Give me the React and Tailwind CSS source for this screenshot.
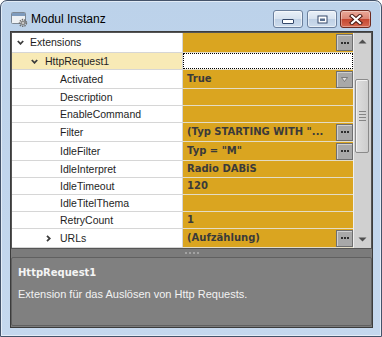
import React from 'react'

const rows = [
  { name: 'Extensions', indent: 'pl-[5px]', chevron: 'down', gap: 'ml-[6px]', btn: 'dots', h: 'h-[20px]' },
  { name: 'HttpRequest1', indent: 'pl-[19px]', chevron: 'down', gap: 'ml-[7px]', selected: true, h: 'h-[17px]' },
  { name: 'Activated', value: 'True', btn: 'drop', h: 'h-[19px]' },
  { name: 'Description', h: 'h-[17px]' },
  { name: 'EnableCommand', h: 'h-[17px]' },
  { name: 'Filter', value: '(Typ STARTING WITH "...', btn: 'dots', h: 'h-[19px]' },
  { name: 'IdleFilter', value: 'Typ = "M"', btn: 'dots', h: 'h-[19px]' },
  { name: 'IdleInterpret', value: 'Radio DABiS', h: 'h-[17px]' },
  { name: 'IdleTimeout', value: '120', h: 'h-[17px]' },
  { name: 'IdleTitelThema', h: 'h-[17px]' },
  { name: 'RetryCount', value: '1', h: 'h-[17px]' },
  { name: 'URLs', indent: 'pl-[34px]', chevron: 'right', gap: 'ml-[9px]', value: '(Aufzählung)', btn: 'dots', h: 'h-[19px]' },
]

function Chevron({ dir }) {
  if (dir === 'right') {
    return (
      <svg width="5" height="7" viewBox="0 0 5 7" className="shrink-0">
        <path d="M1 0.8 L3.8 3.5 L1 6.2" fill="none" stroke="#3c3c3c" strokeWidth="1.8" />
      </svg>
    )
  }
  return (
    <svg width="7" height="5" viewBox="0 0 7 5" className="shrink-0">
      <path d="M0.8 1 L3.5 3.8 L6.2 1" fill="none" stroke="#3c3c3c" strokeWidth="1.8" />
    </svg>
  )
}

function CellButton({ kind }) {
  return (
    <div className="flex h-[17px] w-[17px] shrink-0 items-center justify-center border border-[#6f6f6f] bg-[#a8a8a8] shadow-[inset_1px_1px_0_#cfcfcf]">
      {kind === 'dots' ? (
        <div className="flex gap-[1px]">
          <span className="h-[2px] w-[2px] bg-[#2e2e2e]" />
          <span className="h-[2px] w-[2px] bg-[#2e2e2e]" />
          <span className="h-[2px] w-[2px] bg-[#2e2e2e]" />
        </div>
      ) : (
        <svg width="7" height="5" viewBox="0 0 7 5">
          <path d="M0.5 0.5 L6.5 0.5 L3.5 4.5 Z" fill="#e2e2e2" stroke="#6a6a6a" strokeWidth="0.8" />
        </svg>
      )}
    </div>
  )
}

function PropertyRow({ row }) {
  return (
    <div className={`flex ${row.h}`}>
      <div
        className={`flex w-[171px] items-center border-b border-r border-[#d6d6d6] ${row.indent || 'pl-[48px]'} ${
          row.selected ? 'bg-[#f8eab6]' : 'bg-white'
        }`}
      >
        {row.chevron && <Chevron dir={row.chevron} />}
        <span className={`text-[10.5px] leading-none text-[#1e1e1e] ${row.chevron ? row.gap : ''}`}>{row.name}</span>
      </div>
      {row.selected ? (
        <div className="flex-1 border-b border-[#e3dcc6] bg-white">
          <div className="h-full border border-dotted border-black" />
        </div>
      ) : (
        <div className="flex flex-1 items-center justify-between border-b border-[#e3dcc6] bg-[#daa520] pl-[4px]">
          <span className="font-['DejaVu_Sans',sans-serif] text-[10px] font-bold leading-none text-[#3a3a3a]">
            {row.value}
          </span>
          {row.btn && <CellButton kind={row.btn} />}
        </div>
      )}
    </div>
  )
}

function ScrollBar() {
  return (
    <div className="flex w-[18px] flex-col border-l border-[#efefef] bg-[#d0d0d0]">
      <div className="flex h-[17px] items-center justify-center">
        <svg width="9" height="5" viewBox="0 0 9 5">
          <path d="M0.5 4.5 L4.5 0.5 L8.5 4.5 Z" fill="#4f4f4f" />
        </svg>
      </div>
      <div className="h-[29px]" />
      <div className="ml-[1px] mr-[2px] flex h-[74px] flex-col items-center justify-center gap-[2px] rounded-[2px] border border-[#8a8a8a] bg-gradient-to-r from-[#dedede] to-[#cdcdcd] shadow-[inset_1px_1px_0_#f2f2f2]">
        <span className="h-[1px] w-[7px] bg-[#858585]" />
        <span className="h-[1px] w-[7px] bg-[#858585]" />
        <span className="h-[1px] w-[7px] bg-[#858585]" />
        <span className="h-[1px] w-[7px] bg-[#858585]" />
      </div>
      <div className="flex-1" />
      <div className="flex h-[17px] items-center justify-center">
        <svg width="9" height="5" viewBox="0 0 9 5">
          <path d="M0.5 0.5 L4.5 4.5 L8.5 0.5 Z" fill="#4f4f4f" />
        </svg>
      </div>
    </div>
  )
}

function WindowIcon() {
  return (
    <svg width="17" height="16" viewBox="0 0 17 16" className="shrink-0">
      <rect x="0.5" y="1.5" width="14" height="11" rx="1" fill="#eef1f4" stroke="#7d8894" />
      <rect x="1" y="2" width="13" height="3" fill="#7f9bbd" />
      <circle cx="12" cy="12" r="3.4" fill="none" stroke="#6e6e6e" strokeWidth="1.6" strokeDasharray="1.4 1" />
      <circle cx="12" cy="12" r="2.4" fill="#8a8a8a" />
      <circle cx="12" cy="12" r="0.9" fill="#e4e4e4" />
    </svg>
  )
}

function CaptionButtons() {
  const plain =
    'flex h-[18px] w-[30px] items-center justify-center rounded-[3px] border border-[#6b7f9c] bg-[linear-gradient(to_bottom,#e9f0f8_0%,#d7e2ef_50%,#bfd0e5_50%,#cddced_100%)] shadow-[inset_0_0_0_1px_rgba(255,255,255,0.55)]'
  return (
    <div className="mr-[10px] flex">
      <div className={`${plain} items-end pb-[3px]`}>
        <svg width="12" height="5" viewBox="0 0 12 5">
          <rect x="0.5" y="0.5" width="11" height="4" rx="0.5" fill="#ffffff" stroke="#34486a" />
        </svg>
      </div>
      <div className={`${plain} ml-[4px]`}>
        <svg width="11" height="9" viewBox="0 0 11 9">
          <rect x="0.5" y="0.5" width="10" height="8" fill="#34486a" />
          <rect x="1.5" y="1.5" width="8" height="6" fill="#ffffff" />
          <rect x="3" y="3.5" width="5" height="2.5" fill="#5a7090" />
        </svg>
      </div>
      <div className="ml-[3px] flex h-[18px] w-[31px] items-center justify-center rounded-[3px] border border-[#6e2a20] bg-[linear-gradient(to_bottom,#eaa898_0%,#db8675_50%,#c4462f_50%,#d66a52_100%)] shadow-[inset_0_0_0_1px_rgba(255,255,255,0.35)]">
        <svg width="14" height="11" viewBox="0 0 14 11">
          <path d="M3 2 L11 9 M11 2 L3 9" stroke="#4a1a14" strokeWidth="4.2" strokeLinecap="square" />
          <path d="M3 2 L11 9 M11 2 L3 9" stroke="#ffffff" strokeWidth="2.2" strokeLinecap="square" />
        </svg>
      </div>
    </div>
  )
}

export default function App() {
  return (
    <div className="flex h-[337px] w-[382px] flex-col overflow-hidden rounded-t-[7px] border border-[#44536a] bg-gradient-to-b from-[#bcd2ea] to-[#c5d8ee] font-['Liberation_Sans',Arial,sans-serif] shadow-[inset_0_0_0_1px_rgba(255,255,255,0.55)]">
      {/* title bar */}
      <div className="flex h-[30px] shrink-0 items-center pt-[6px]">
        <div className="ml-[10px]">
          <WindowIcon />
        </div>
        <span className="ml-[3px] text-[12px] leading-none text-black">Modul Instanz</span>
        <div className="flex-1" />
        <CaptionButtons />
      </div>

      {/* client area */}
      <div className="ml-[9px] flex h-[297px] w-[363px] flex-col border border-[#3c3c3c] bg-[#7b7b7b]">
        <div className="flex h-[217px] border border-[#555555]">
          <div className="flex w-[341px] flex-col">
            {rows.map((r) => (
              <PropertyRow key={r.name} row={r} />
            ))}
          </div>
          <ScrollBar />
        </div>

        {/* splitter */}
        <div className="flex h-[8px] items-center justify-center gap-[2px]">
          <span className="h-[2px] w-[2px] bg-[#a2a2a2]" />
          <span className="h-[2px] w-[2px] bg-[#a2a2a2]" />
          <span className="h-[2px] w-[2px] bg-[#a2a2a2]" />
          <span className="h-[2px] w-[2px] bg-[#a2a2a2]" />
        </div>

        {/* description panel */}
        <div className="h-[69px] rounded-[2px] border border-[#606060] bg-[#808080] px-[6px] pt-[10px]">
          <div className="font-['DejaVu_Sans',sans-serif] text-[10px] font-bold leading-none text-[#f4f4f4]">
            HttpRequest1
          </div>
          <div className="mt-[11px] text-[11px] leading-none text-[#f2f2f2]">
            Extension für das Auslösen von Http Requests.
          </div>
        </div>
      </div>
    </div>
  )
}
